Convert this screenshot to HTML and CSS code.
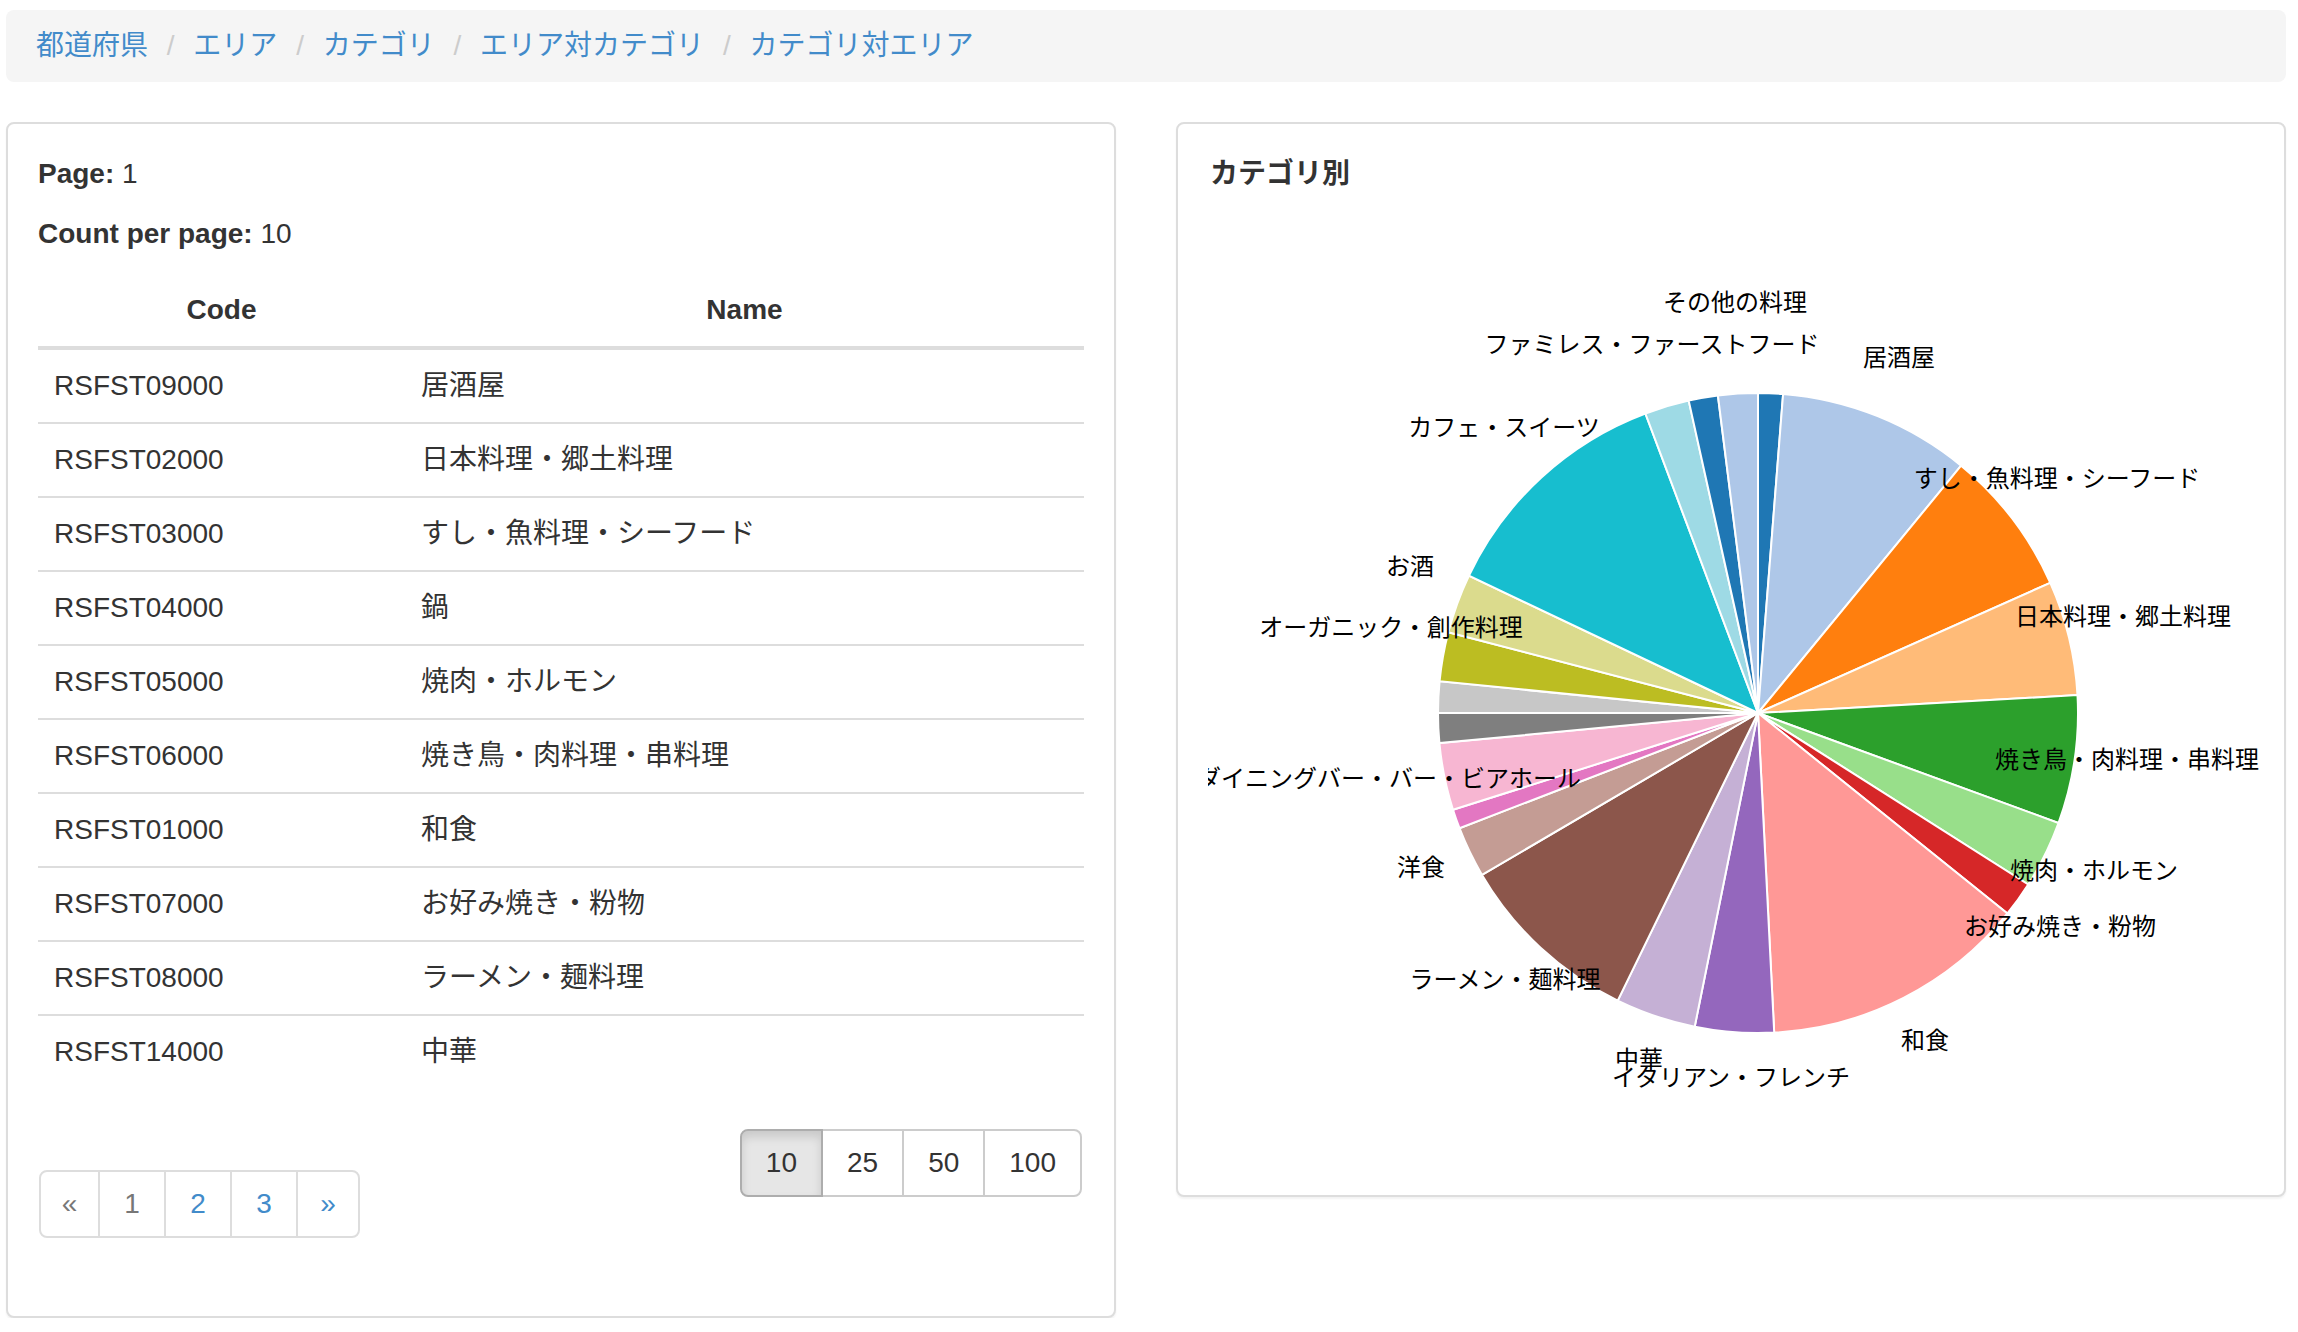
FILE: index.html
```html
<!DOCTYPE html>
<html lang="ja">
<head>
<meta charset="utf-8">
<title>カテゴリ</title>
<link rel="stylesheet" href="styles.css">
</head>
<body>
<div class="page">
  <ol class="breadcrumb">
    <li><a href="#">都道府県</a></li>
    <li><a href="#">エリア</a></li>
    <li><a href="#">カテゴリ</a></li>
    <li><a href="#">エリア対カテゴリ</a></li>
    <li><a href="#">カテゴリ対エリア</a></li>
  </ol>

  <div class="row">
    <div class="panel panel-left">
      <p class="meta"><strong>Page:</strong> 1</p>
      <p class="meta"><strong>Count per page:</strong> 10</p>
      <table class="table">
        <thead>
          <tr><th class="col-code">Code</th><th>Name</th></tr>
        </thead>
        <tbody>
          <tr><td>RSFST09000</td><td>居酒屋</td></tr>
          <tr><td>RSFST02000</td><td>日本料理・郷土料理</td></tr>
          <tr><td>RSFST03000</td><td>すし・魚料理・シーフード</td></tr>
          <tr><td>RSFST04000</td><td>鍋</td></tr>
          <tr><td>RSFST05000</td><td>焼肉・ホルモン</td></tr>
          <tr><td>RSFST06000</td><td>焼き鳥・肉料理・串料理</td></tr>
          <tr><td>RSFST01000</td><td>和食</td></tr>
          <tr><td>RSFST07000</td><td>お好み焼き・粉物</td></tr>
          <tr><td>RSFST08000</td><td>ラーメン・麺料理</td></tr>
          <tr><td>RSFST14000</td><td>中華</td></tr>
        </tbody>
      </table>
      <div class="table-footer">
        <ul class="pagination">
          <li class="disabled"><span>&laquo;</span></li>
          <li class="disabled"><span>1</span></li>
          <li><a href="#">2</a></li>
          <li><a href="#">3</a></li>
          <li><a href="#">&raquo;</a></li>
        </ul>
        <div class="btn-group">
          <button class="btn active">10</button>
          <button class="btn">25</button>
          <button class="btn">50</button>
          <button class="btn">100</button>
        </div>
      </div>
    </div>

    <div class="panel panel-right">
      <div class="panel-title">カテゴリ別</div>
      <svg class="pie" width="1100" height="971" viewBox="0 0 1100 971">
        <g class="slices">
          <path class="c1" d="M550,519L550,199A320,320 0 0 1 575.1,200Z"/>
          <path class="c2" d="M550,519L575.1,200A320,320 0 0 1 753.1,271.7Z"/>
          <path class="c3" d="M550,519L753.1,271.7A320,320 0 0 1 842.3,388.8Z"/>
          <path class="c4" d="M550,519L842.3,388.8A320,320 0 0 1 869.5,501.1Z"/>
          <path class="c5" d="M550,519L869.5,501.1A320,320 0 0 1 850.5,629Z"/>
          <path class="c6" d="M550,519L850.5,629A320,320 0 0 1 820.2,690.5Z"/>
          <path class="c7" d="M550,519L820.2,690.5A320,320 0 0 1 799.4,719.5Z"/>
          <path class="c8" d="M550,519L799.4,719.5A320,320 0 0 1 566.2,838.6Z"/>
          <path class="c9" d="M550,519L566.2,838.6A320,320 0 0 1 486.7,832.7Z"/>
          <path class="c10" d="M550,519L486.7,832.7A320,320 0 0 1 409.7,806.6Z"/>
          <path class="c11" d="M550,519L409.7,806.6A320,320 0 0 1 274,680.9Z"/>
          <path class="c12" d="M550,519L274,680.9A320,320 0 0 1 251.5,634.2Z"/>
          <path class="c13" d="M550,519L251.5,634.2A320,320 0 0 1 245,615.8Z"/>
          <path class="c14" d="M550,519L245,615.8A320,320 0 0 1 231.4,549.1Z"/>
          <path class="c15" d="M550,519L231.4,549.1A320,320 0 0 1 230,519Z"/>
          <path class="c16" d="M550,519L230,519A320,320 0 0 1 231.6,487.2Z"/>
          <path class="c17" d="M550,519L231.6,487.2A320,320 0 0 1 240.3,438.3Z"/>
          <path class="c18" d="M550,519L240.3,438.3A320,320 0 0 1 260.9,381.7Z"/>
          <path class="c19" d="M550,519L260.9,381.7A320,320 0 0 1 437.4,219.5Z"/>
          <path class="c20" d="M550,519L437.4,219.5A320,320 0 0 1 480.7,206.6Z"/>
          <path class="c1" d="M550,519L480.7,206.6A320,320 0 0 1 509.9,201.5Z"/>
          <path class="c2" d="M550,519L509.9,201.5A320,320 0 0 1 550,199Z"/>
        </g>
        <g class="labels">
          <text x="691" y="172">居酒屋</text>
          <text x="849" y="293">すし・魚料理・シーフード</text>
          <text x="915" y="431">日本料理・郷土料理</text>
          <text x="919" y="574">焼き鳥・肉料理・串料理</text>
          <text x="886" y="685">焼肉・ホルモン</text>
          <text x="852" y="741">お好み焼き・粉物</text>
          <text x="717" y="855">和食</text>
          <text x="523" y="892">イタリアン・フレンチ</text>
          <text x="431" y="874">中華</text>
          <text x="297" y="794">ラーメン・麺料理</text>
          <text x="213" y="682">洋食</text>
          <text x="181" y="593">ダイニングバー・バー・ビアホール</text>
          <text x="183" y="442">オーガニック・創作料理</text>
          <text x="202" y="381">お酒</text>
          <text x="296" y="242">カフェ・スイーツ</text>
          <text x="444" y="159">ファミレス・ファーストフード</text>
          <text x="527" y="117">その他の料理</text>
        </g>
      </svg>
    </div>
  </div>
</div>
</body>
</html>
```

FILE: styles.css
```css
* { box-sizing: border-box; }

html, body {
  margin: 0;
  padding: 0;
  background: #fff;
}

body {
  font-family: "Liberation Sans", "Noto Sans CJK JP", sans-serif;
  font-size: 28px;
  line-height: 40px;
  color: #333;
}

.page {
  width: 2280px;
  margin: 10px 0 0 6px;
}

a { color: #428bca; text-decoration: none; }

/* Breadcrumb */
.breadcrumb {
  list-style: none;
  margin: 0 0 40px 0;
  padding: 16px 30px;
  background: #f5f5f5;
  border-radius: 8px;
  height: 72px;
}
.breadcrumb li { display: inline-block; }
.breadcrumb li + li::before {
  content: "/\00a0";
  padding: 0 11px;
  color: #ccc;
}

/* Layout */
.row {
  display: grid;
  grid-template-columns: 1110px 1110px;
  column-gap: 60px;
  align-items: start;
}

.panel {
  background: #fff;
  border: 2px solid #ddd;
  border-radius: 8px;
  box-shadow: 0 2px 2px rgba(0, 0, 0, 0.05);
  padding: 30px;
}

.meta { margin: 0 0 20px 0; }
.meta strong { font-weight: bold; }

/* Table */
.table {
  width: 100%;
  border-collapse: collapse;
  border-spacing: 0;
  margin-bottom: 40px;
}
.table th {
  padding: 16px;
  text-align: center;
  font-weight: bold;
  vertical-align: bottom;
  border-bottom: 4px solid #ddd;
  line-height: 40px;
}
.table td {
  padding: 16px;
  border-top: 2px solid #ddd;
  line-height: 40px;
  height: 72px;
  text-align: left;
  vertical-align: top;
}
.col-code { width: 367px; }

/* Footer: pagination + page size */
.table-footer {
  display: flex;
  justify-content: space-between;
  align-items: flex-start;
  padding-right: 2px;
}

.pagination {
  display: flex;
  list-style: none;
  margin: 42px 0 48px 1px;
  padding: 0;
}
.pagination li > a,
.pagination li > span {
  display: block;
  width: 68px;
  padding: 12px 0;
  text-align: center;
  line-height: 40px;
  border: 2px solid #ddd;
  margin-left: -2px;
  background: #fff;
  color: #428bca;
}
.pagination li:first-child > span {
  width: 61px;
  margin-left: 0;
  border-radius: 8px 0 0 8px;
}
.pagination li:last-child > a {
  width: 64px;
  border-radius: 0 8px 8px 0;
}
.pagination li.disabled > span { color: #777; }

.btn-group {
  display: flex;
  margin-top: 1px;
}
.btn {
  font-family: inherit;
  font-size: 28px;
  line-height: 40px;
  padding: 12px 24px;
  border: 2px solid #ccc;
  background: #fff;
  color: #333;
  margin: 0 0 0 -2px;
  border-radius: 0;
  cursor: pointer;
}
.btn:first-child { margin-left: 0; border-radius: 8px 0 0 8px; }
.btn:last-child { border-radius: 0 8px 8px 0; }
.btn.active {
  background: #e6e6e6;
  border-color: #adadad;
  box-shadow: inset 0 6px 10px rgba(0, 0, 0, 0.125);
  position: relative;
}

/* Chart panel */
.panel-title {
  font-weight: bold;
  line-height: 40px;
  padding-left: 2px;
}
.pie { display: block; overflow: hidden; }
.slices path { stroke: #fff; stroke-width: 2; }
.labels text {
  font-family: "Noto Sans CJK JP", sans-serif;
  font-size: 24px;
  fill: #000;
  text-anchor: middle;
}

.c1 { fill: #1f77b4; }
.c2 { fill: #aec7e8; }
.c3 { fill: #ff7f0e; }
.c4 { fill: #ffbb78; }
.c5 { fill: #2ca02c; }
.c6 { fill: #98df8a; }
.c7 { fill: #d62728; }
.c8 { fill: #ff9896; }
.c9 { fill: #9467bd; }
.c10 { fill: #c5b0d5; }
.c11 { fill: #8c564b; }
.c12 { fill: #c49c94; }
.c13 { fill: #e377c2; }
.c14 { fill: #f7b6d2; }
.c15 { fill: #7f7f7f; }
.c16 { fill: #c7c7c7; }
.c17 { fill: #bcbd22; }
.c18 { fill: #dbdb8d; }
.c19 { fill: #17becf; }
.c20 { fill: #9edae5; }
```
